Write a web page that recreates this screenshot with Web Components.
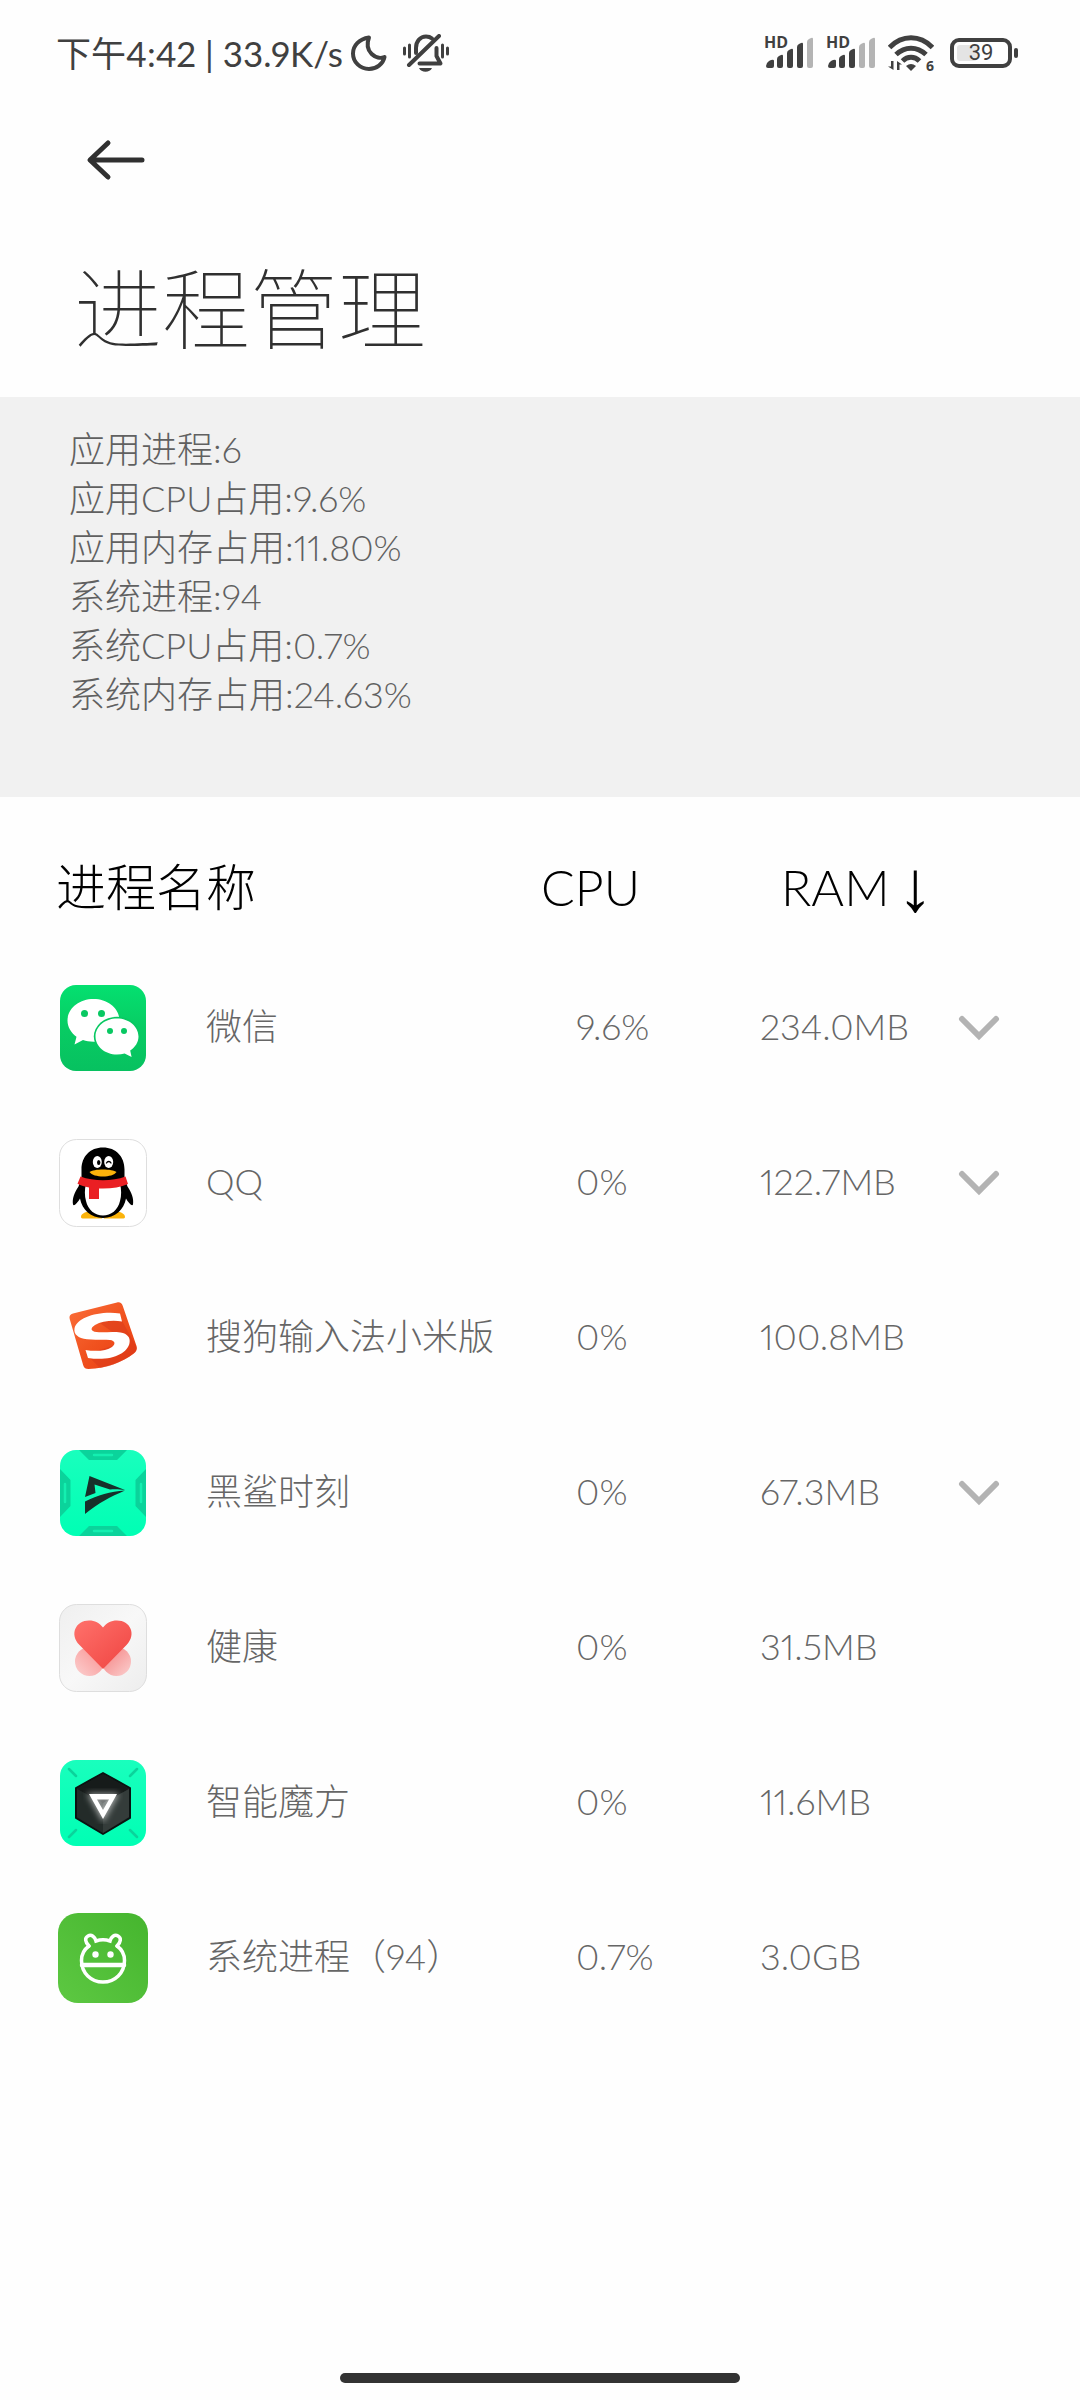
<!DOCTYPE html>
<html lang="zh-CN">
<head>
<meta charset="UTF-8">
<meta name="viewport" content="width=device-width, initial-scale=1">
<title>进程管理</title>
<style>
  html, body {
    margin: 0;
    height: 100%;
  }

  body {
    background: #fefefe;
    font-family: Lato, "Noto Sans CJK SC", sans-serif;
    font-weight: 300;
    font-variant-numeric: proportional-nums;
  }
</style>
</head>
<body>
<process-page></process-page>

<script>
const ICONS = {
  wechat: `
    <svg viewBox="0 0 90 90">
      <defs><linearGradient id="g" x1="0" y1="0" x2="0" y2="1"><stop offset="0" stop-color="#04e070"/><stop offset=".5" stop-color="#08cc63"/><stop offset="1" stop-color="#07c160"/></linearGradient></defs>
      <rect x="2" y="2" width="86" height="86" rx="16" fill="url(#g)"/>
      <path fill="#fff" d="M35.500 16C21 16 9.500 25.500 9.500 37.500c0 6.500 3.500 12.300 9 16.300l-2 7.700 8.500-4.400c3.200 1 6.500 1.600 10.500 1.600 14.500 0 26-9.200 26-21.200S50 16 35.500 16z"/>
      <ellipse cx="59" cy="53.500" rx="23.200" ry="19.800" fill="#08c862"/>
      <path fill="#fff" d="M59 35.500c-12 0-21.500 8-21.500 18S47 71.500 59 71.500c2.700 0 5.200-.4 7.600-1.100l7 3.700-1.400-6.600c5-3.300 8.300-8.300 8.300-14 0-10-9.500-18-21.500-18z"/>
      <g fill="#08c862"><circle cx="26.500" cy="30.500" r="3.500"/><circle cx="43.500" cy="30.500" r="3.500"/><circle cx="52" cy="48" r="3"/><circle cx="66" cy="48" r="3"/></g>
    </svg>`,
  qq: `
    <svg viewBox="0 0 90 90">
      <rect x="1.500" y="1.500" width="87" height="87" rx="17" fill="#fff" stroke="#dedede"/>
      <path fill="#fbb30b" d="M23 79c0-4 6-6 11-5l10 4v2.500H26c-2 0-3-.5-3-1.500zm44 0c0-4-6-6-11-5l-10 4v2.500h18c2 0 3-.5 3-1.500z"/>
      <path fill="#000" d="M45 9.500c-13 0-21.500 9-21.500 22v8l-3 9c-4 6-6.500 12-5.500 18 1 2 4-1 7-6 2 11 11 19.500 23 19.500S66 71.500 68 60.500c3 5 6 8 7 6 1-6-1.500-12-5.500-18l-3-9v-8c0-13-8.500-22-21.500-22z"/>
      <path fill="#fff" d="M28 46h34c1.500 5 1.500 12 0 17-2 9-9 14.500-17 14.500S30 72 28 63c-1.500-5-1.500-12 0-17z"/>
      <path fill="#ea1f23" d="M22.500 38.500C36 43.500 54 43.500 67.500 38.500l2.500 7.500c-8 3.500-18 5-29 4.500v10.500H31V49.500c-4.500-.7-8-2-11.500-3.700z"/>
      <ellipse cx="39.300" cy="24" rx="4.500" ry="6" fill="#fff"/><ellipse cx="50.700" cy="24" rx="4.500" ry="6" fill="#fff"/>
      <ellipse cx="40.700" cy="24.500" rx="1.700" ry="2.500"/>
      <path d="M48.500 25c1-2 3.500-2 4.500 0" fill="none" stroke="#000" stroke-width="1.300" stroke-linecap="round"/>
      <path fill="#fbb30b" d="M31.500 34c4-3.500 23-3.500 27 0-4 6-23 6-27 0z"/>
    </svg>`,
  sogou: `
    <svg viewBox="0 0 90 90">
      <defs><linearGradient id="g" x1="0" y1="0" x2="1" y2="1"><stop offset="0" stop-color="#fb6f3a"/><stop offset=".5" stop-color="#f0521f"/><stop offset="1" stop-color="#e93a10"/></linearGradient></defs>
      <path fill="url(#g)" d="M15 20.500L59 9.500c3-.7 4.800.5 5.700 3.200L78.500 53c1 3-.2 5.500-2.700 7.500C64 69.500 49 75 30.500 76c-2.800 0-4.500-1-5.300-3.800L11.700 26c-.8-3 .5-4.800 3.300-5.500z"/>
      <path fill="#d8381a" opacity=".5" d="M63 26l15.500 28c.5 3-1 5-3 6.500C66 68 54 73 42 75L28 61l40-12-33-24z"/>
      <path fill="#fff" d="M62 20.500l2 8c-9-1.500-20-.5-27 3.500-5 3-4.500 6.500 1.500 7 8 .7 16-.8 24 .5 7 1.200 10 5 9 10.500-2 11-19 18.500-41.500 15l-2.500-8c11 1.800 21 .8 26.500-3 4-3 3-6.500-2-7-8-.8-15 .3-23-.7-9-1.200-13.500-5-12.500-10.800C18.500 25 40 17.500 62 20.500z"/>
    </svg>`,
  shark: `
    <svg viewBox="0 0 90 90">
      <defs><clipPath id="c"><rect x="2" y="2" width="86" height="86" rx="16"/></clipPath>
      <linearGradient id="g" x1="0" y1="0" x2="0" y2="1"><stop offset="0" stop-color="#19ffbd"/><stop offset="1" stop-color="#00ffb4"/></linearGradient></defs>
      <g clip-path="url(#c)">
        <rect x="2" y="2" width="86" height="86" fill="url(#g)"/>
        <path fill="#0bd39b" d="M21 2h48L59 12H31zM21 88h48L59 78H31zM2 21l10.500 11v26L2 69zM88 21L77.500 32v26L88 69z"/>
        <path stroke="#14efb0" stroke-width="2.500" stroke-linecap="round" d="M36 7h18M36 83h18M7 36v18M83 36v18"/>
      </g>
      <path fill="#17302a" d="M31.500 28L67 42c-6-.8-10-1-15-.5L36.500 36.500l1 8.500-10.500 4z"/>
      <path fill="#17302a" d="M67 42.500C52 49 41 54.500 27 66V53.500c13-6.500 25-10 40-11z"/>
    </svg>`,
  health: `
    <svg viewBox="0 0 90 90">
      <defs><linearGradient id="b" x1="0" y1="0" x2="1" y2="1"><stop offset="0" stop-color="#efefef"/><stop offset=".5" stop-color="#f8f8f8"/><stop offset="1" stop-color="#ededed"/></linearGradient>
      <linearGradient id="h" x1="0" y1="0" x2="1" y2="1"><stop offset="0" stop-color="#ff716b"/><stop offset="1" stop-color="#ef4441"/></linearGradient>
      <linearGradient id="p" x1="0" y1="1" x2="1" y2="0"><stop offset="0" stop-color="#fbd0d0"/><stop offset="1" stop-color="#f98d8c"/></linearGradient>
      <linearGradient id="q" x1="1" y1="1" x2="0" y2="0"><stop offset="0" stop-color="#fbd0d0"/><stop offset="1" stop-color="#f47c7b"/></linearGradient></defs>
      <rect x="1.500" y="1.500" width="87" height="87" rx="17" fill="url(#b)" stroke="#dedede"/>
      <circle cx="31.500" cy="58.500" r="14.500" fill="url(#p)"/><circle cx="58.500" cy="58.500" r="14.500" fill="url(#q)"/>
      <path fill="url(#h)" d="M45 66L21.500 42C11 31 18 17.500 31 17.500c6 0 10.500 2.500 14 7 3.500-4.500 8-7 14-7C72 17.500 79 31 68.500 42z"/>
    </svg>`,
  cube: `
    <svg viewBox="0 0 90 90">
      <defs><linearGradient id="g" x1="0" y1="0" x2="0" y2="1"><stop offset="0" stop-color="#19ffbd"/><stop offset="1" stop-color="#00ffb4"/></linearGradient>
      <filter id="f" x="-50%" y="-50%" width="200%" height="200%"><feGaussianBlur stdDeviation="3"/></filter></defs>
      <rect x="2" y="2" width="86" height="86" rx="16" fill="url(#g)"/>
      <path stroke="#0bd39b" stroke-width="2.500" stroke-linecap="round" d="M11 11l7 7M79 11l-7 7M11 79l7-7M79 79l-7-7"/>
      <path fill="#1c2423" stroke="#0b1211" stroke-width="2" stroke-linejoin="round" d="M45 15l27 15v30L45 76 18 60V30z"/>
      <path fill="#161b1a" d="M45 16l26 15-26 14-26-14z"/>
      <path fill="#343c3a" d="M45 45l26-14v28L45 75z"/>
      <path fill="#232b29" d="M45 45L19 31v28l26 16z"/>
      <path fill="none" stroke="#fff" stroke-width="7" opacity=".6" filter="url(#f)" d="M35 39h20L45 57z"/>
      <path fill="#fff" fill-rule="evenodd" d="M31 36h28L45 61zM39 41.500l6 10.500 6-10.500z"/>
    </svg>`,
  system: `
    <svg viewBox="0 0 90 90">
      <defs><linearGradient id="g" x1="0" y1="1" x2="1" y2="0"><stop offset="0" stop-color="#5dc842"/><stop offset="1" stop-color="#45b52e"/></linearGradient></defs>
      <rect width="90" height="90" rx="20" fill="url(#g)"/>
      <g fill="none" stroke="#fff" stroke-width="3.500" stroke-linecap="round">
        <path d="M31 33c-5 3.500-7.500 8.500-7.500 14.500C23.500 60 33 69 45 69s21.500-9 21.500-21.500c0-6-2.500-11-7.500-14.500"/>
        <path d="M31 33c-4-4-4.500-8-1-10s7 1 8 5c4-1.300 10-1.300 14 0 1-4 4.500-7 8-5s3 6-1 10"/>
        <path d="M24 52h42" stroke-width="4.500"/>
      </g>
      <circle cx="37.500" cy="41.500" r="3.200" fill="#fff"/><circle cx="52.500" cy="41.500" r="3.200" fill="#fff"/>
    </svg>`
};

const PROCESSES = [
  { icon: 'wechat', name: '微信', cpu: '9.6%', ram: '234.0MB', expandable: true },
  { icon: 'qq', name: 'QQ', cpu: '0%', ram: '122.7MB', expandable: true },
  { icon: 'sogou', name: '搜狗输入法小米版', cpu: '0%', ram: '100.8MB' },
  { icon: 'shark', name: '黑鲨时刻', cpu: '0%', ram: '67.3MB', expandable: true },
  { icon: 'health', name: '健康', cpu: '0%', ram: '31.5MB' },
  { icon: 'cube', name: '智能魔方', cpu: '0%', ram: '11.6MB' },
  { icon: 'system', name: '系统进程（94）', cpu: '0.7%', ram: '3.0GB' }
];

class AppIcon extends HTMLElement {
  constructor() {
    super();
    this.attachShadow({ mode: 'open' });
  }

  connectedCallback() {
    this.shadowRoot.innerHTML = `
      <style>
        :host {
          display: block;
          flex: none;
          width: 90px;
          height: 90px;
        }

        svg {
          display: block;
          width: 100%;
          height: 100%;
        }
      </style>
      ${ICONS[this.getAttribute('name')] || ''}
    `;
  }
}

class SignalBars extends HTMLElement {
  constructor() {
    super();
    this.attachShadow({ mode: 'open' });
  }

  connectedCallback() {
    const level = parseInt(this.getAttribute('level')) || 0;
    const bars = [
      'M0 29q0-3 3-5l2-1q3-1 3 1v5q0 2-2 2H2q-2 0-2-2z',
      'M11 22q0-2 2-3l2-1q2-1 2 1v10q0 2-2 2h-2q-2 0-2-2z',
      'M21 16q0-2 2-3l2-1q2-1 2 1v16q0 2-2 2h-2q-2 0-2-2z',
      'M31 10q0-2 2-3l2-1q2-1 2 1v22q0 2-2 2h-2q-2 0-2-2z',
      'M41 5q0-2 2-3l2-1q2-1 2 1v27q0 2-2 2h-2q-2 0-2-2z'
    ];

    this.shadowRoot.innerHTML = `
      <style>
        :host {
          display: block;
          position: relative;
          padding-left: 2px;
        }

        svg {
          display: block;
        }

        /* метка сети поверх шкалы */
        span {
          position: absolute;
          top: -3px;
          left: 0;
          font: 700 16px/16px "Open Sans", sans-serif;
        }
      </style>
      <svg width="48" height="32" viewBox="0 0 48 32">
        ${bars.map((d, i) => `<path d="${d}" fill="${i < level ? '#404040' : '#b4b4b4'}"/>`).join('')}
      </svg>
      <span>HD</span>
    `;
  }
}

class StatusBar extends HTMLElement {
  constructor() {
    super();
    this.attachShadow({ mode: 'open' });
    this.shadowRoot.innerHTML = `
      <style>
        :host {
          display: flex;
          justify-content: space-between;
          align-items: center;
          height: 106px;
          padding: 0 62px 0 56px;
          color: #404040;
          font-size: 35px;
          font-weight: 400;
        }

        .side {
          display: flex;
          align-items: center;
        }

        .side.right {
          gap: 12px;
        }

        .clock {
          padding-bottom: 4px;
        }

        svg {
          display: block;
        }

        .moon {
          margin: 0 16px 0 8px;
        }

        .wifi {
          position: relative;
        }

        .wifi span {
          position: absolute;
          right: 0;
          bottom: -2px;
          font: 700 14px/14px "Open Sans", sans-serif;
        }

        .battery {
          position: relative;
          margin-left: 4px;
        }

        .battery span {
          position: absolute;
          inset: 0 6px 0 0;
          font: 400 22px/32px Roboto, sans-serif;
          text-align: center;
        }
      </style>
      <div class="side">
        <span class="clock">下午4:42 | 33.9K/s</span>
        <svg class="moon" width="36" height="36" viewBox="0 0 36 36"><path fill="none" stroke="#404040" stroke-width="4" stroke-linejoin="round" d="M18 2.500C8 4 2 10.500 2 18.500 2 27 9 34 18 34c7.500 0 14-5 15.500-12-8 3.500-21-5-15.500-19.500z"/></svg>
        <svg width="46" height="38" viewBox="0 0 46 38">
          <g fill="none" stroke="#404040" stroke-linecap="round">
            <path stroke-width="3" d="M1.500 14v6M6.500 11v12M44.500 14v6M39.500 11v12"/>
            <path stroke-width="4" d="M6 31L36 2"/>
            <path stroke-width="4" d="M13 19v-5c0-7 4.500-11.500 10-11.500 2.500 0 4.500.7 6 2"/>
            <path stroke-width="4" stroke-linejoin="round" d="M33.500 14v8l4 7.500H16.500"/>
          </g>
          <path fill="#404040" d="M16 34h13c-2 5-11 5-13 0z"/>
        </svg>
      </div>
      <div class="side right">
        <signal-bars level="4"></signal-bars>
        <signal-bars level="3"></signal-bars>
        <div class="wifi">
          <svg width="46" height="36" viewBox="0 0 46 36">
            <g fill="none" stroke="#404040" stroke-width="5">
              <path d="M1.500 12.500C14-.5 32-.5 44.500 12.500"/>
              <path d="M8 19.500c9-8.500 21-8.500 30 0"/>
              <path d="M14.500 26c5-5 12-5 17 0"/>
            </g>
            <path fill="#404040" d="M18 31q5-4 10 0l-5 5z"/>
            <path fill="#404040" d="M3 26h2.500v9L0 31.500h3zM9 35V26l5 3.500h-2.500V35z"/>
          </svg>
          <span>6</span>
        </div>
        <div class="battery">
          <svg width="68" height="32" viewBox="0 0 68 32">
            <rect x="2" y="3" width="58" height="26" rx="7" fill="none" stroke="#404040" stroke-width="4"/>
            <rect x="7" y="8" width="20" height="16" rx="3" fill="#e4e4e4"/>
            <rect x="64" y="11" width="4" height="10" rx="2" fill="#404040"/>
          </svg>
          <span>39</span>
        </div>
      </div>
    `;
  }
}

class PageHeader extends HTMLElement {
  constructor() {
    super();
    this.attachShadow({ mode: 'open' });
    this.shadowRoot.innerHTML = `
      <style>
        :host {
          display: block;
          height: 291px;
          color: #303030;
        }

        button {
          display: block;
          padding: 32px 84px;
          border: none;
          background: none;
          cursor: pointer;
        }

        svg {
          display: block;
        }

        h1 {
          margin: 28px 74px 0;
          font-size: 88px;
          font-weight: 100;
          line-height: 132px;
        }
      </style>
      <button type="button" aria-label="返回">
        <svg width="64" height="44" viewBox="0 0 64 44"><path fill="none" stroke="#303030" stroke-width="5" stroke-linecap="round" stroke-linejoin="round" d="M24 5L6 22l18 17M7 22h51"/></svg>
      </button>
      <h1><slot></slot></h1>
    `;
  }
}

class UsageSummary extends HTMLElement {
  constructor() {
    super();
    this.attachShadow({ mode: 'open' });
    this.shadowRoot.innerHTML = `
      <style>
        :host {
          display: block;
          padding: 28px 69px 78px;
          background: #f1f1f1;
          color: #606060;
          font-size: 36px;
          line-height: 49px;
        }
      </style>
      <slot></slot>
    `;
  }
}

class ProcessTable extends HTMLElement {
  constructor() {
    super();
    this.attachShadow({ mode: 'open' });
    this.shadowRoot.innerHTML = `
      <style>
        :host {
          display: block;
          padding-top: 31px;
        }

        table {
          width: 100%;
          table-layout: fixed;
          border-collapse: collapse;
          color: #666;
          font-size: 36px;
        }

        th, td {
          box-sizing: border-box;
          padding: 0;
          text-align: left;
          white-space: nowrap;
        }

        th {
          height: 122px;
          padding-bottom: 4px;
          color: #000;
          font-size: 50px;
          font-weight: 300;
          line-height: 60px;
        }

        td {
          height: 155px;
          line-height: 48px;
        }

        td.cpu, td.ram { padding-bottom: 3px; }

        .name { width: 50%; }
        .cpu { width: 20%; }
        .more { width: 138px; }

        th.name { padding-left: 56px; }
        th.cpu { padding-left: 1px; }
        th.ram { padding-left: 25px; }
        td.name { padding-left: 58px; }
        td.cpu { padding-left: 36px; }
        td.ram { padding-left: 4px; }

        .app {
          display: flex;
          align-items: center;
          gap: 58px;
        }

        .app span { padding-bottom: 3px; }

        button {
          display: inline-flex;
          align-items: center;
          padding: 0;
          border: none;
          background: none;
          color: inherit;
          font: inherit;
          cursor: pointer;
        }

        .sort {
          gap: 8px;
        }

        .sort span {
          font-family: "Liberation Serif", serif;
          font-size: 72px;
          font-weight: 400;
          line-height: 60px;
        }

        .toggle {
          padding: 20px 16px;
        }

        .toggle svg {
          display: block;
        }
      </style>
      <table>
        <thead>
          <tr>
            <th class="name">进程名称</th>
            <th class="cpu">CPU</th>
            <th class="ram"><button class="sort" type="button">RAM<span>↓</span></button></th>
            <th class="more"></th>
          </tr>
        </thead>
        <tbody></tbody>
      </table>
    `;

    this.bodyElement = this.shadowRoot.querySelector('tbody');
  }

  connectedCallback() {
    this.render(PROCESSES);
  }

  render(processes) {
    this.bodyElement.innerHTML = processes.map((item) => `
      <tr>
        <td class="name"><div class="app"><app-icon name="${item.icon}"></app-icon><span>${item.name}</span></div></td>
        <td class="cpu">${item.cpu}</td>
        <td class="ram">${item.ram}</td>
        <td class="more">${item.expandable ? this.toggleButton(item.name) : ''}</td>
      </tr>
    `).join('');
  }

  toggleButton(name) {
    return `
      <button class="toggle" type="button" aria-label="展开${name}">
        <svg width="42" height="28" viewBox="0 0 42 28"><path fill="none" stroke="#b3b3b3" stroke-width="6" stroke-linecap="round" d="M4 5l17 17L38 5"/></svg>
      </button>`;
  }
}

class ProcessPage extends HTMLElement {
  constructor() {
    super();
    this.attachShadow({ mode: 'open' });
    this.shadowRoot.innerHTML = `
      <style>
        :host {
          display: flex;
          flex-direction: column;
          min-height: 100%;
        }

        main {
          flex: 1;
        }

        footer {
          padding: 16px 0 17px;
        }

        .handle {
          width: 37%;
          height: 10px;
          margin: 0 auto;
          border-radius: 5px;
          background: #333;
        }
      </style>
      <status-bar></status-bar>
      <page-header>进程管理</page-header>
      <main>
        <usage-summary>
          <div>应用进程:6</div>
          <div>应用CPU占用:9.6%</div>
          <div>应用内存占用:11.80%</div>
          <div>系统进程:94</div>
          <div>系统CPU占用:0.7%</div>
          <div>系统内存占用:24.63%</div>
        </usage-summary>
        <process-table></process-table>
      </main>
      <footer><div class="handle"></div></footer>
    `;
  }
}

customElements.define('app-icon', AppIcon);
customElements.define('signal-bars', SignalBars);
customElements.define('status-bar', StatusBar);
customElements.define('page-header', PageHeader);
customElements.define('usage-summary', UsageSummary);
customElements.define('process-table', ProcessTable);
customElements.define('process-page', ProcessPage);
</script>
</body>
</html>
